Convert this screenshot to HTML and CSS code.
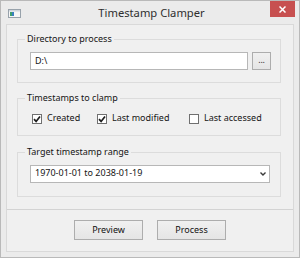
FILE: index.html
```html
<!DOCTYPE html>
<html>
<head>
<meta charset="utf-8">
<link rel="stylesheet" href="styles.css">
</head>
<body>
<div class="window">
  <div class="titlebar">
    <div class="tb-left">
      <svg class="appicon" width="13" height="9" viewBox="0 0 13 9">
        <rect x="0.5" y="0.5" width="12" height="8" fill="#f6f6f6" stroke="#98a2ab"/>
        <rect x="1" y="1" width="11" height="1.5" fill="#cfd6dc"/>
        <rect x="2" y="3" width="2" height="4" fill="#3f9f6c"/>
        <rect x="4" y="3" width="2" height="4" fill="#3b7fbf"/>
      </svg>
    </div>
    <div class="title">Timestamp Clamper</div>
    <div class="tb-right">
      <div class="close">
        <svg width="7" height="7" viewBox="0 0 7 7"><path d="M0.5 0.5 L6.5 6.5 M6.5 0.5 L0.5 6.5" stroke="#fff" stroke-width="1.5"/></svg>
      </div>
    </div>
  </div>
  <div class="client">
    <div class="panel">
      <fieldset class="group g-dir">
        <legend>Directory to process</legend>
        <div class="dirrow">
          <div class="textbox">D:\</div>
          <div class="btn browse">...</div>
        </div>
      </fieldset>
      <fieldset class="group g-ts">
        <legend>Timestamps to clamp</legend>
        <div class="checks">
          <div class="check">
            <span class="box"><svg width="8" height="8" viewBox="0 0 8 8"><path d="M1 4.2 L3.1 6.4 L7 1.4" fill="none" stroke="#1e1e1e" stroke-width="1.7"/></svg></span>
            <span class="lbl">Created</span>
          </div>
          <div class="check">
            <span class="box"><svg width="8" height="8" viewBox="0 0 8 8"><path d="M1 4.2 L3.1 6.4 L7 1.4" fill="none" stroke="#1e1e1e" stroke-width="1.7"/></svg></span>
            <span class="lbl">Last modified</span>
          </div>
          <div class="check">
            <span class="box"></span>
            <span class="lbl">Last accessed</span>
          </div>
        </div>
      </fieldset>
      <fieldset class="group g-range">
        <legend>Target timestamp range</legend>
        <div class="rangerow">
          <div class="select">
            <span class="seltext">1970-01-01 to 2038-01-19</span>
            <svg class="chev" width="6" height="4" viewBox="0 0 6 4"><path d="M0.5 0.5 L3 3 L5.5 0.5" fill="none" stroke="#3a3a3a" stroke-width="1.4"/></svg>
          </div>
        </div>
      </fieldset>
    </div>
    <div class="actions">
      <div class="btn push">Preview</div>
      <div class="btn push">Process</div>
    </div>
  </div>
</div>
</body>
</html>
```
FILE: styles.css
```css
html, body {
  margin: 0;
  padding: 0;
  background: #ebebeb;
}
body {
  font-family: "Noto Sans", "Open Sans", sans-serif;
  font-size: 9px;
  color: #151515;
}
.window {
  width: 300px;
  height: 258px;
  box-sizing: border-box;
  border: 1px solid #b9b9b9;
  background: #ebebeb;
  display: flex;
  flex-direction: column;
}
.titlebar {
  height: 23px;
  flex: none;
  display: grid;
  grid-template-columns: 1fr auto 1fr;
  align-items: start;
  padding: 0 4px 0 7px;
}
.tb-left {
  justify-self: start;
  padding-top: 8px;
}
.appicon {
  display: block;
}
.title {
  font-size: 11.2px;
  line-height: 23px;
  color: #2e2e2e;
  white-space: nowrap;
}
.tb-right {
  justify-self: end;
}
.close {
  width: 25px;
  height: 16px;
  background: #c75050;
  display: flex;
  align-items: center;
  justify-content: center;
}
.close svg {
  display: block;
}
.client {
  flex: 1;
  margin: 0 5px 5px 5px;
  border: 1px solid #d9d9d9;
  background: #f0f0f0;
  display: flex;
  flex-direction: column;
}
.panel {
  padding: 8px 12px 12px 10px;
  border-bottom: 1px solid #d3d3d3;
}
.group {
  margin: 0;
  padding: 0;
  border: 1px solid #dcdcdc;
  min-width: 0;
}
.group legend {
  margin-left: 7px;
  padding: 0 2px;
  line-height: 12px;
  font-size: 9px;
  color: #151515;
}
.g-ts {
  margin-top: 9px;
}
.g-range {
  margin-top: 10px;
}
.dirrow {
  display: flex;
  gap: 4px;
  padding: 7px 9px 12px 12px;
}
.textbox {
  flex: 1;
  height: 18px;
  box-sizing: border-box;
  border: 1px solid #b7b7b7;
  background: #fff;
  padding: 0 4px;
  line-height: 16px;
}
.btn {
  box-sizing: border-box;
  border: 1px solid #adadad;
  background: linear-gradient(#f0f0f0, #e5e5e5);
  text-align: center;
  color: #111;
}
.browse {
  width: 19px;
  height: 18px;
  line-height: 14px;
  color: #333;
  letter-spacing: -0.3px;
}
.checks {
  display: grid;
  grid-template-columns: 65px 92px auto;
  padding: 8px 0 11px 14px;
}
.check {
  display: flex;
  align-items: flex-start;
  gap: 5px;
  line-height: 12px;
}
.box {
  width: 10px;
  height: 10px;
  box-sizing: border-box;
  margin-top: 2px;
  border: 1px solid #707070;
  background: #fff;
  display: flex;
  align-items: center;
  justify-content: center;
}
.box svg {
  display: block;
}
.rangerow {
  padding: 7px 10px 13px 12px;
}
.select {
  height: 18px;
  box-sizing: border-box;
  border: 1px solid #b7b7b7;
  background: #fff;
  padding: 0 3px 0 4px;
  display: flex;
  justify-content: space-between;
  align-items: flex-start;
  line-height: 13px;
}
.chev {
  display: block;
  margin-top: 6px;
}
.actions {
  flex: 1;
  display: flex;
  justify-content: center;
  align-items: flex-start;
  gap: 14px;
  padding-top: 10px;
}
.push {
  width: 69px;
  height: 20px;
  line-height: 18px;
}
```
